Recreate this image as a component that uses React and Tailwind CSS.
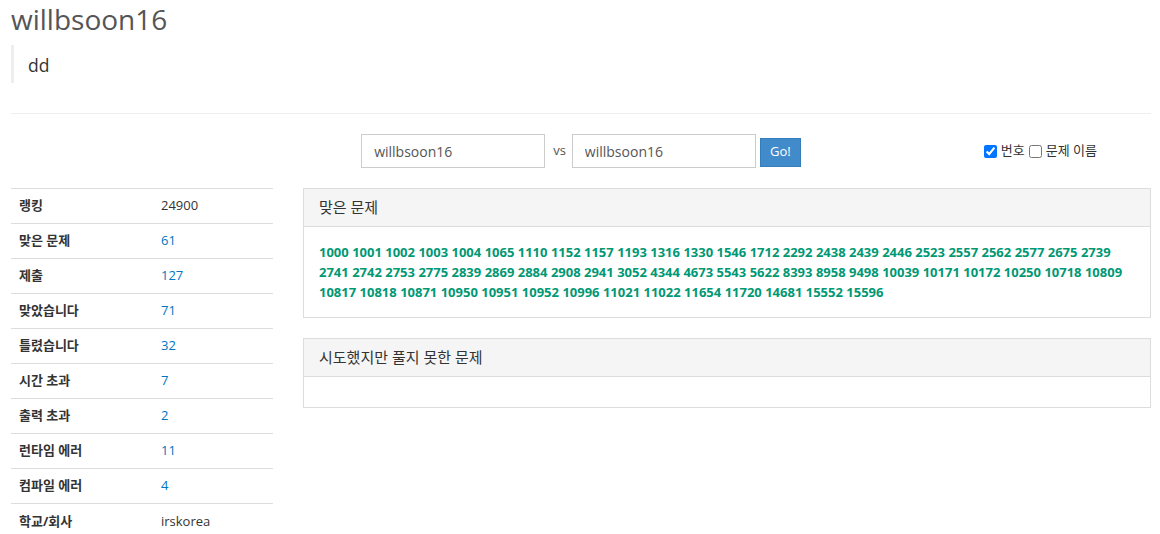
import React from 'react';

const FONT = '"Open Sans", "Noto Sans CJK KR", sans-serif';

const SOLVED = [
  1000, 1001, 1002, 1003, 1004, 1065, 1110, 1152, 1157, 1193, 1316, 1330, 1546, 1712, 2292, 2438, 2439, 2446, 2523,
  2557, 2562, 2577, 2675, 2739, 2741, 2742, 2753, 2775, 2839, 2869, 2884, 2908, 2941, 3052, 4344, 4673, 5543, 5622,
  8393, 8958, 9498, 10039, 10171, 10172, 10250, 10718, 10809, 10817, 10818, 10871, 10950, 10951, 10952, 10996, 11021,
  11022, 11654, 11720, 14681, 15552, 15596,
];

const STATS = [
  { label: '랭킹', value: '24900' },
  { label: '맞은 문제', value: '61', link: true },
  { label: '제출', value: '127', link: true },
  { label: '맞았습니다', value: '71', link: true },
  { label: '틀렸습니다', value: '32', link: true },
  { label: '시간 초과', value: '7', link: true },
  { label: '출력 초과', value: '2', link: true },
  { label: '런타임 에러', value: '11', link: true },
  { label: '컴파일 에러', value: '4', link: true },
  { label: '학교/회사', value: 'irskorea' },
];

function Panel({ title, children }) {
  return (
    <div className="border border-[#ddd] bg-white">
      <div className="h-[38px] bg-[#f5f5f5] border-b border-[#ddd] px-[15px] pb-[1px] flex items-center text-[15px] text-[#333]">
        {title}
      </div>
      <div className="p-[15px]">{children}</div>
    </div>
  );
}

export default function App() {
  return (
    <div className="min-h-screen bg-white pl-[11px] pr-[9px]" style={{ fontFamily: FONT }}>
      {/* Header */}
      <h1 className="text-[28px] leading-[38px] text-[#555] font-normal">willbsoon16</h1>
      <blockquote className="mt-[7px] border-l-[3px] border-[#eee] pl-[14px] pt-[3px] h-[38px] flex items-center text-[17.5px] text-[#333]">
        dd
      </blockquote>
      <hr className="mt-[30px] border-t border-[#eee]" />

      {/* Compare form */}
      <div className="mt-[20px] grid grid-cols-[1fr_auto_1fr] items-center h-[34px]">
        <div />
        <div className="flex items-center">
          <input
            readOnly
            value="willbsoon16"
            className="w-[184px] h-[34px] border border-[#ccc] px-[12px] text-[14px] text-[#555] outline-none"
          />
          <span className="ml-[8px] mr-[6px] text-[13px] text-[#555]">vs</span>
          <input
            readOnly
            value="willbsoon16"
            className="w-[184px] h-[34px] border border-[#ccc] px-[12px] text-[14px] text-[#555] outline-none"
          />
          <button className="ml-[4px] mt-[2px] w-[41px] h-[29px] bg-[#428bca] border border-[#357ebd] text-white text-[13px]">
            Go!
          </button>
        </div>
        <div className="flex justify-end pr-[54px] items-center text-[13px] text-[#333]">
          <input type="checkbox" defaultChecked className="w-[13px] h-[13px] accent-[#0075ff]" />
          <span className="ml-[4px]">번호</span>
          <input type="checkbox" className="w-[13px] h-[13px] ml-[4px]" />
          <span className="ml-[4px]">문제 이름</span>
        </div>
      </div>

      {/* Main */}
      <div className="mt-[20px] flex gap-[30px]">
        <div className="w-[262px] shrink-0">
          <table className="w-full text-[13px]">
            <tbody>
              {STATS.map((s) => (
                <tr key={s.label} className="border-t border-[#ddd] h-[35px]">
                  <th className="w-[150px] text-left pl-[8px] font-bold text-[#333]">{s.label}</th>
                  <td className={s.link ? 'text-[#0076c0]' : 'text-[#333]'}>{s.value}</td>
                </tr>
              ))}
            </tbody>
          </table>
        </div>

        <div className="flex-1 flex flex-col gap-[20px]">
          <Panel title="맞은 문제">
            <div className="text-[13px] leading-[20px] font-bold text-[#009874]">
              {SOLVED.map((n, i) => (
                <React.Fragment key={n}>
                  <span>{n}</span>
                  {i < SOLVED.length - 1 ? ' ' : ''}
                </React.Fragment>
              ))}
            </div>
          </Panel>
          <Panel title="시도했지만 풀지 못한 문제" />
        </div>
      </div>
    </div>
  );
}
